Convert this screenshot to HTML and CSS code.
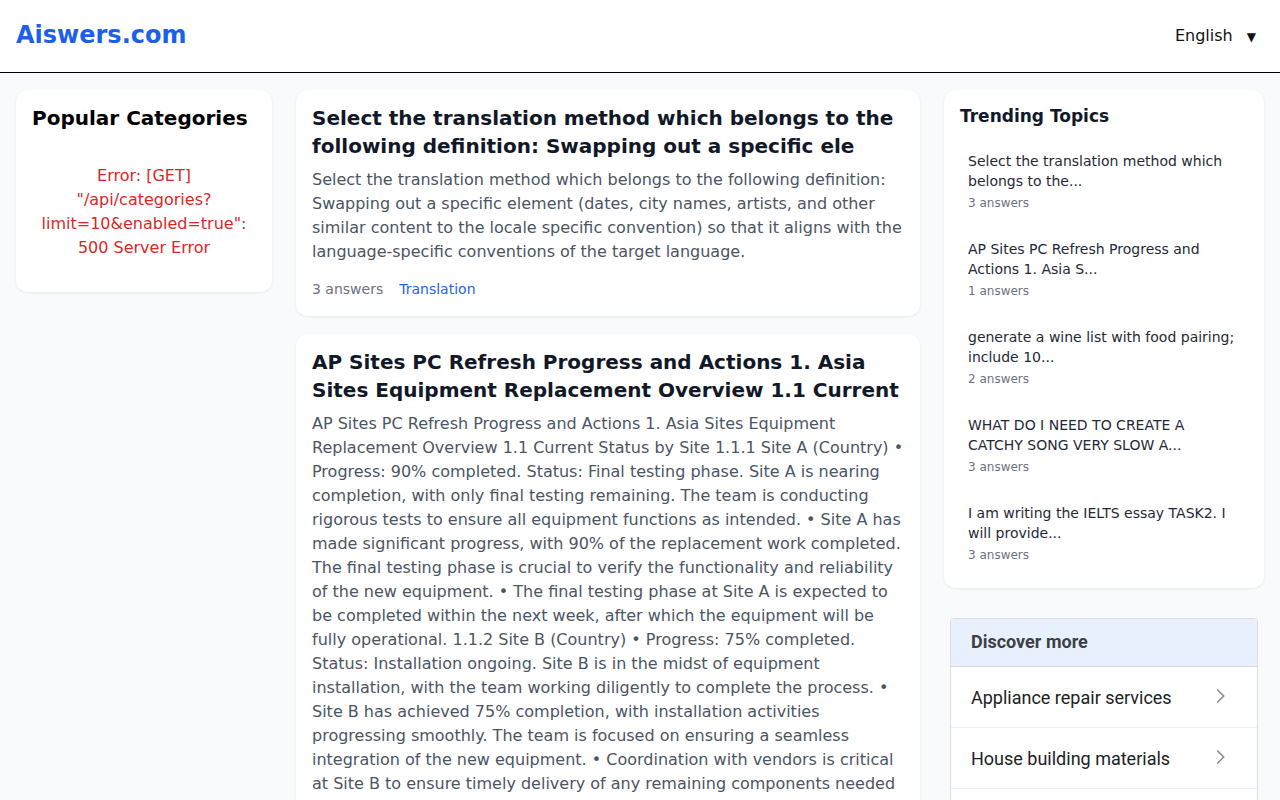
FILE: index.html
```html
<!DOCTYPE html>
<html lang="en">
<head>
<meta charset="UTF-8">
<meta name="viewport" content="width=device-width, initial-scale=1.0">
<title>Aiswers.com</title>
<link rel="stylesheet" href="styles.css">
</head>
<body>
<header class="topbar">
  <a class="logo" href="#">Aiswers.com</a>
  <div class="lang">English <span class="caret">▼</span></div>
</header>

<main class="layout">
  <aside class="card categories">
    <h2>Popular Categories</h2>
    <p class="error">Error: [GET] "/api/categories?limit=10&amp;enabled=true": 500 Server Error</p>
  </aside>

  <section class="feed">
    <article class="card question">
      <h3>Select the translation method which belongs to the following definition: Swapping out a specific ele</h3>
      <p class="excerpt">Select the translation method which belongs to the following definition: Swapping out a specific element (dates, city names, artists, and other similar content to the locale specific convention) so that it aligns with the language-specific conventions of the target language.</p>
      <div class="meta">
        <span>3 answers</span>
        <a href="#">Translation</a>
      </div>
    </article>

    <article class="card question">
      <h3>AP Sites PC Refresh Progress and Actions 1. Asia Sites Equipment Replacement Overview 1.1 Current</h3>
      <p class="excerpt">AP Sites PC Refresh Progress and Actions 1. Asia Sites Equipment Replacement Overview 1.1 Current Status by Site 1.1.1 Site A (Country) • Progress: 90% completed. Status: Final testing phase. Site A is nearing completion, with only final testing remaining. The team is conducting rigorous tests to ensure all equipment functions as intended. • Site A has made significant progress, with 90% of the replacement work completed. The final testing phase is crucial to verify the functionality and reliability of the new equipment. • The final testing phase at Site A is expected to be completed within the next week, after which the equipment will be fully operational. 1.1.2 Site B (Country) • Progress: 75% completed. Status: Installation ongoing. Site B is in the midst of equipment installation, with the team working diligently to complete the process. • Site B has achieved 75% completion, with installation activities progressing smoothly. The team is focused on ensuring a seamless integration of the new equipment. • Coordination with vendors is critical at Site B to ensure timely delivery of any remaining components needed for the installation.</p>
      <div class="meta">
        <span>1 answers</span>
      </div>
    </article>
  </section>

  <aside class="side">
    <div class="card trending">
      <h2>Trending Topics</h2>
      <ul>
        <li><a href="#">Select the translation method which belongs to the...</a><span>3 answers</span></li>
        <li><a href="#">AP Sites PC Refresh Progress and Actions 1. Asia S...</a><span>1 answers</span></li>
        <li><a href="#">generate a wine list with food pairing; include 10...</a><span>2 answers</span></li>
        <li><a href="#">WHAT DO I NEED TO CREATE A CATCHY SONG VERY SLOW A...</a><span>3 answers</span></li>
        <li><a href="#">I am writing the IELTS essay TASK2. I will provide...</a><span>3 answers</span></li>
      </ul>
    </div>

    <div class="discover">
      <div class="discover-head">Discover more</div>
      <a class="discover-row" href="#">Appliance repair services
        <svg viewBox="0 0 24 24" width="22" height="22"><path d="M9 5l7 7-7 7" fill="none" stroke="currentColor" stroke-width="1.6"/></svg>
      </a>
      <a class="discover-row" href="#">House building materials
        <svg viewBox="0 0 24 24" width="22" height="22"><path d="M9 5l7 7-7 7" fill="none" stroke="currentColor" stroke-width="1.6"/></svg>
      </a>
      <a class="discover-row" href="#">Language learning software
        <svg viewBox="0 0 24 24" width="22" height="22"><path d="M9 5l7 7-7 7" fill="none" stroke="currentColor" stroke-width="1.6"/></svg>
      </a>
    </div>
  </aside>
</main>
</body>
</html>
```

FILE: styles.css
```css
body {
  margin: 0;
  font-family: "DejaVu Sans", sans-serif;
  background-color: #f8fafc;
  color: #111827;
}
a {
  text-decoration: none;
}

/* barra superior */
.topbar {
  height: 72px;
  display: flex;
  align-items: center;
  justify-content: space-between;
  padding: 0 24px 0 16px;
  background-color: #fff;
  border-bottom: 1px solid #000;
}
.logo {
  font-size: 24px;
  font-weight: bold;
  color: #1d5fe8;
  margin-top: -2px;
}
.lang {
  font-size: 16px;
  color: #111;
  margin-top: -2px;
}
.caret {
  font-size: 12px;
  margin-left: 9px;
}

/* tres columnas */
.layout {
  display: grid;
  grid-template-columns: 256px 624px 320px;
  gap: 24px;
  padding: 17px 16px 0;
  align-items: start;
}
.card {
  background-color: #fff;
  border-radius: 12px;
  box-shadow: 0 1px 3px rgba(0, 0, 0, 0.08);
  padding: 16px;
}

.categories h2 {
  margin: 0;
  font-size: 20px;
  line-height: 24px;
  color: #000;
}
.error {
  margin: 34px 0 16px;
  color: #dc2626;
  text-align: center;
  font-size: 16px;
  line-height: 24px;
}

.feed {
  display: flex;
  flex-direction: column;
  gap: 18px;
}
.question {
  padding: 14px 16px 17px;
}
.question h3 {
  margin: 0;
  font-size: 20px;
  line-height: 28px;
  color: #111827;
}
.excerpt {
  margin: 8px 0 0;
  font-size: 16px;
  line-height: 24px;
  color: #4b5563;
}
.meta {
  display: flex;
  gap: 16px;
  margin-top: 15px;
  font-size: 14px;
  line-height: 20px;
  color: #6b7280;
}
.meta a {
  color: #2563eb;
}

/* columna derecha */
.trending {
  padding-bottom: 17px;
}
.trending h2 {
  margin: 0;
  font-size: 17px;
  line-height: 20px;
  color: #111827;
}
.trending ul {
  list-style: none;
  margin: 17px 0 0;
  padding: 0;
  display: flex;
  flex-direction: column;
  gap: 12px;
}
.trending li {
  padding: 8px;
}
.trending li a {
  display: block;
  font-size: 14px;
  line-height: 20px;
  color: #1f2937;
}
.trending li span {
  display: block;
  margin-top: 4px;
  font-size: 12px;
  line-height: 16px;
  color: #6b7280;
}

.discover {
  margin: 30px 6px 0;
  border: 1px solid #dadce0;
  border-radius: 4px;
  background-color: #fff;
  font-family: Roboto, "Noto Sans", sans-serif;
  overflow: hidden;
}
.discover-head {
  height: 48px;
  display: flex;
  align-items: center;
  padding: 0 20px 2px;
  box-sizing: border-box;
  background-color: #e8f0fe;
  border-bottom: 1px solid #d2d8e0;
  font-size: 18px;
  font-weight: bold;
  color: #3c4043;
}
.discover-row {
  height: 60px;
  display: flex;
  align-items: center;
  justify-content: space-between;
  padding: 0 26px 0 20px;
  border-bottom: 1px solid #eceff1;
  font-size: 18px;
  color: #202124;
}
.discover-row svg {
  color: #80868b;
  margin-top: -2px;
}
```
